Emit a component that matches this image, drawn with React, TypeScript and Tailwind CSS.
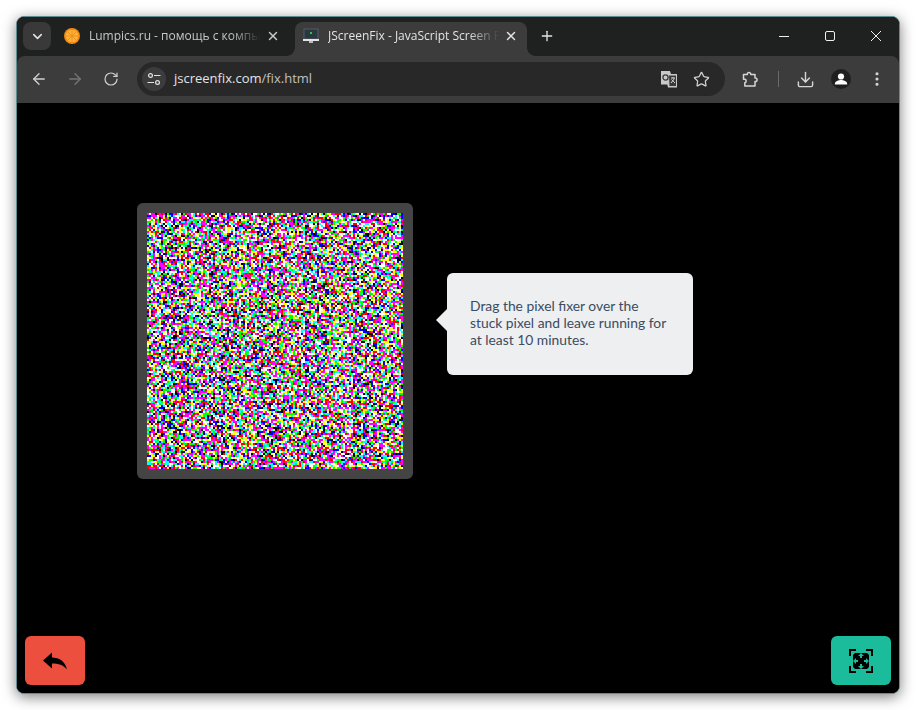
import { useEffect, useRef } from 'react';
import { ArrowLeft, ArrowRight, ChevronDown, Download, EllipsisVertical, Plus, RotateCw, Star, X } from 'lucide-react';

const NOISE_COLORS = [
  '#ffffff', '#ffffff', '#ffffff',
  '#ffff00', '#ffff00',
  '#ff00ff', '#ff00ff', '#ff00ff',
  '#00ffff', '#00ffff',
  '#ff0000', '#ff0000',
  '#00ff00', '#00ff00',
  '#0000ff', '#0000ff',
  '#000000',
];

function NoiseCanvas() {
  const ref = useRef<HTMLCanvasElement>(null);

  useEffect(() => {
    const ctx = ref.current?.getContext('2d');
    if (!ctx) return;
    // fixed seed, so every run draws the same noise
    let seed = 1337;
    const next = () => {
      seed = Math.imul(seed, 1103515245) + 12345;
      seed = seed >>> 0;
      return ((seed >>> 8) & 0xffff) / 65536;
    };
    const pick = () => NOISE_COLORS[Math.floor(next() * NOISE_COLORS.length)];
    // small repeating tile mixed with free noise gives the faint banding of the reference
    const tile = Array.from({ length: 24 * 24 }, pick);
    for (let y = 0; y < 128; y++) {
      for (let x = 0; x < 128; x++) {
        ctx.fillStyle = next() < 0.5 ? tile[(y % 24) * 24 + (x % 24)] : pick();
        ctx.fillRect(x * 2, y * 2, 2, 2);
      }
    }
  }, []);

  return <canvas ref={ref} width={256} height={256} className="block w-[256px] h-[256px]" />;
}

function OrangeIcon() {
  return (
    <svg width="16" height="16" viewBox="0 0 16 16" className="shrink-0">
      <circle cx="8" cy="8" r="8" fill="#f08a10" />
      <circle cx="8" cy="8" r="6.200" fill="#ffb23e" />
      <g stroke="#f08a10" strokeWidth="0.900">
        <path d="M8 2v12M2 8h12M3.800 3.800l8.400 8.400M12.200 3.800l-8.400 8.400" />
      </g>
    </svg>
  );
}

function MonitorIcon() {
  return (
    <svg width="16" height="16" viewBox="0 0 16 16" className="shrink-0">
      <rect x="1" y="1" width="14" height="10" fill="#2b3640" stroke="#5b6770" strokeWidth="0.800" />
      <rect x="7" y="4" width="2" height="2" fill="#18d03a" />
      <rect x="0" y="11" width="16" height="2" fill="#e4e4e4" />
      <rect x="6" y="13" width="4" height="2" fill="#bdbdbd" />
    </svg>
  );
}

function SiteInfoIcon() {
  return (
    <svg width="14" height="14" viewBox="0 0 14 14" fill="none" stroke="#e3e3e3" strokeWidth="1.200">
      <circle cx="3.500" cy="3.500" r="1.900" />
      <path d="M7 3.500h6.500M.5 10.500H7" />
      <circle cx="10.500" cy="10.500" r="1.900" />
    </svg>
  );
}

function TranslateIcon() {
  return (
    <svg width="18" height="18" viewBox="0 0 18 18">
      <path d="M1 1h9l1 3h6v13.500H8l-.7-3H1z" fill="#c9c9c9" />
      <path d="M8.500 5h8v11.500h-7.500z" fill="#3a3a3a" stroke="#c9c9c9" />
      <circle cx="5.500" cy="7.500" r="2.600" fill="none" stroke="#3c3c3c" strokeWidth="1.300" />
      <path d="M11 8h4M13 7v1.500M14.500 8.500L11 13M11.500 9.500L15 13" stroke="#d0d0d0" strokeWidth="1" fill="none" />
    </svg>
  );
}

function PuzzleIcon() {
  return (
    <svg width="18" height="18" viewBox="0 0 18 18" fill="none" stroke="#d5d5d5" strokeWidth="1.500" strokeLinejoin="round">
      <path d="M1.500 4.500h3.800c-.5-2.800 3.900-2.800 3.400 0h4.300v3.600c2.800-.5 2.800 3.900 0 3.400v4.500H2.800v-3.300c1.700.2 1.700-3.600 0-3.400H1.500z" />
    </svg>
  );
}

function ReplyIcon() {
  return (
    <svg width="24" height="18" viewBox="0 0 24 18" fill="#000">
      <path d="M0 8.500L9 .5V5.500C16 5.500 22 9 24 17.500C20.500 13 15.500 11.500 9 11.500V16.500Z" />
    </svg>
  );
}

function FullscreenIcon() {
  return (
    <svg width="24" height="24" viewBox="0 0 24 24">
      <path d="M1 7V1h6M17 1h6v6M23 17v6h-6M7 23H1v-6" fill="none" stroke="#000" strokeWidth="2" />
      <rect x="4" y="4" width="16" height="16" fill="#000" />
      <g fill="#1abc9c">
        <path d="M12 4l3 3h-2v2h-2V7H9z" />
        <path d="M12 20l3-3h-2v-2h-2v2H9z" />
        <path d="M4 12l3-3v2h2v2H7v2z" />
        <path d="M20 12l-3-3v2h-2v2h2v2z" />
      </g>
      <path d="M4 4h2L4 6zM20 4v2l-2-2zM4 20v-2l2 2zM20 20h-2l2-2z" fill="#1abc9c" />
    </svg>
  );
}

function ToolbarButton({ children }: { children: React.ReactNode }) {
  return <div className="flex items-center justify-center w-9 h-9 shrink-0">{children}</div>;
}

export default function App() {
  return (
    <div className="h-[710px] bg-white pt-4 pl-4 font-['Open_Sans',sans-serif]">
      <div className="w-[884px] h-[678px] rounded-lg border border-[#5f8c92] overflow-hidden shadow-[0_3px_14px_rgba(0,0,0,0.5)] flex flex-col bg-black">
        {/* Tab strip */}
        <div className="h-[39px] shrink-0 bg-[#1f2121] pt-[5px] flex items-start">
          <div className="ml-[6px] w-7 h-7 rounded-lg bg-[#393939] flex items-center justify-center">
            <ChevronDown size={15} strokeWidth={2.5} className="text-[#e3e3e3]" />
          </div>

          <div className="ml-[5px] w-[232px] h-[28px] pl-2 pr-[7px] flex items-center">
            <OrangeIcon />
            <span className="ml-[9px] mr-1 flex-1 min-w-0 overflow-hidden whitespace-nowrap text-[12px] text-[#c4c7c5] [mask-image:linear-gradient(to_right,black_82%,transparent)]">
              Lumpics.ru - помощь с компьютером
            </span>
            <X size={14} strokeWidth={2.5} className="shrink-0 mx-px text-[#c7c7c7]" />
          </div>

          <div className="relative ml-[7px] w-[232px] h-[34px] pl-2 pr-2 pb-[6px] flex items-center rounded-t-lg bg-[#3c3c3c]">
            <span className="absolute -left-2 bottom-0 w-2 h-2 bg-[radial-gradient(circle_at_0_0,transparent_7.5px,#3c3c3c_8px)]" />
            <span className="absolute -right-2 bottom-0 w-2 h-2 bg-[radial-gradient(circle_at_100%_0,transparent_7.5px,#3c3c3c_8px)]" />
            <MonitorIcon />
            <span className="ml-[9px] mr-1 flex-1 min-w-0 overflow-hidden whitespace-nowrap text-[12px] text-[#e3e3e3] [mask-image:linear-gradient(to_right,black_82%,transparent)]">
              JScreenFix - JavaScript Screen Pixel Fixer
            </span>
            <X size={14} strokeWidth={2.5} className="shrink-0 mx-px text-[#e3e3e3]" />
          </div>

          <div className="ml-[6px] w-7 h-7 flex items-center justify-center">
            <Plus size={16} strokeWidth={2} className="text-[#e3e3e3]" />
          </div>

          <div className="ml-auto flex">
            <div className="w-[46px] h-[28px] flex items-center justify-center">
              <div className="w-[10px] h-px bg-[#f0f0f0]" />
            </div>
            <div className="w-[46px] h-[28px] flex items-center justify-center">
              <div className="w-[10px] h-[10px] rounded-[2px] border border-[#f0f0f0]" />
            </div>
            <div className="w-[46px] h-[28px] flex items-center justify-center">
              <svg width="10" height="10" viewBox="0 0 10 10" stroke="#f0f0f0" strokeWidth="1">
                <path d="M0 0l10 10M10 0L0 10" />
              </svg>
            </div>
          </div>
        </div>

        {/* Toolbar */}
        <div className="h-[47px] shrink-0 bg-[#1f2121]">
          <div className="h-full rounded-t-lg bg-[#3c3c3c] pl-1 pb-px flex items-center">
            <ToolbarButton>
              <ArrowLeft size={18} strokeWidth={1.8} className="text-[#d0d0d0]" />
            </ToolbarButton>
            <ToolbarButton>
              <ArrowRight size={18} strokeWidth={1.8} className="text-[#747474]" />
            </ToolbarButton>
            <ToolbarButton>
              <RotateCw size={16} strokeWidth={1.8} className="text-[#d0d0d0]" />
            </ToolbarButton>

            <div className="ml-2 w-[588px] h-[34px] rounded-full bg-[#282828] flex items-center pl-[5px] pr-[15px]">
              <div className="w-6 h-6 rounded-full bg-[#3c3c3c] flex items-center justify-center shrink-0">
                <SiteInfoIcon />
              </div>
              <span className="ml-2 text-[13px] text-[#e3e3e3]">
                jscreenfix.com<span className="text-[#c0c0c0]">/fix.html</span>
              </span>
              <div className="ml-auto flex items-center gap-[15px]">
                <TranslateIcon />
                <Star size={17} strokeWidth={1.8} className="text-[#d0d0d0]" />
              </div>
            </div>

            <div className="ml-2">
              <ToolbarButton>
                <PuzzleIcon />
              </ToolbarButton>
            </div>
            <div className="w-[18px] flex justify-center">
              <div className="w-px h-4 bg-[#6a6a6a]" />
            </div>
            <ToolbarButton>
              <Download size={19} strokeWidth={1.8} className="text-[#d5d5d5]" />
            </ToolbarButton>
            <ToolbarButton>
              <div className="w-5 h-5 rounded-full bg-[#1f1f1f] flex items-center justify-center overflow-hidden">
                <svg width="20" height="20" viewBox="0 0 20 20" fill="#fff">
                  <circle cx="10" cy="7.500" r="3.100" />
                  <path d="M3.800 15c0-3 4-4 6.200-4s6.200 1 6.200 4v.5H3.800z" />
                </svg>
              </div>
            </ToolbarButton>
            <ToolbarButton>
              <EllipsisVertical size={18} strokeWidth={2.2} className="text-[#d5d5d5]" />
            </ToolbarButton>
          </div>
        </div>

        {/* Page */}
        <div className="flex-1 min-h-0 bg-black flex flex-col font-['Lato',sans-serif]">
          <div className="pt-[100px] pl-[120px] flex items-start">
            <div className="rounded-md bg-[#444444] p-[10px]">
              <NoiseCanvas />
            </div>
            <div className="relative ml-[34px] mt-[70px] w-[246px] h-[102px] rounded-md bg-[#edeff1] pl-[23px] pr-[25px] pt-[24px] text-[13.85px] leading-[17px] text-[#3b4c61]">
              <span className="absolute -left-[11px] top-[36px] w-0 h-0 border-y-[11px] border-y-transparent border-r-[11px] border-r-[#edeff1]" />
              Drag the pixel fixer over the stuck pixel and leave running for at least 10 minutes.
            </div>
          </div>

          <div className="mt-auto px-2 pb-2 flex justify-between">
            <div className="w-[60px] h-[49px] rounded-md bg-[#ec4f3e] flex items-center justify-center">
              <ReplyIcon />
            </div>
            <div className="w-[60px] h-[49px] rounded-md bg-[#1abc9c] flex items-center justify-center">
              <FullscreenIcon />
            </div>
          </div>
        </div>
      </div>
    </div>
  );
}
